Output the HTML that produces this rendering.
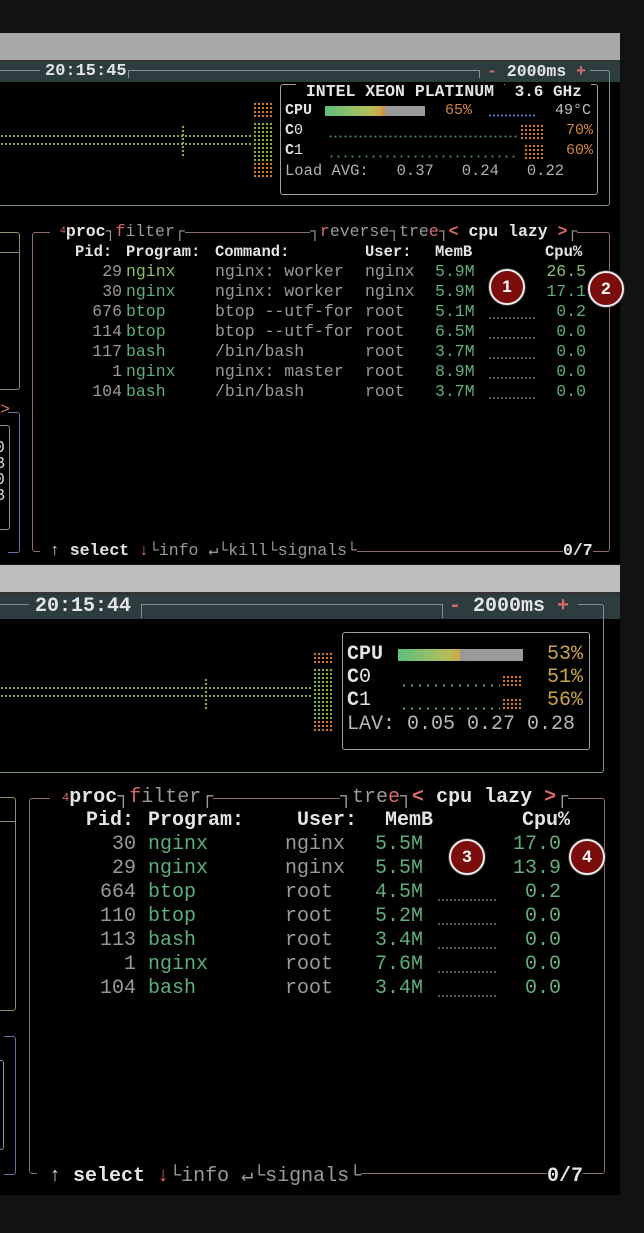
<!DOCTYPE html>
<html><head><meta charset="utf-8"><style>
*{margin:0;padding:0;box-sizing:border-box}
body{width:644px;height:1233px;background:#121212;position:relative;overflow:hidden;font-family:"Liberation Mono",monospace}
.a{position:absolute}
.t{position:absolute;white-space:pre;font-size:16.5px;line-height:20px;color:#9a9a9a}
.u{position:absolute;white-space:pre;font-size:20px;line-height:24px;color:#9a9a9a}
.ra{text-align:right}
.b{font-weight:bold;color:#e4e4e4}
.g{color:#5fae7c}.lg{color:#8fbf6a}.o{color:#d4843c}.y{color:#c9a64a}.r{color:#d86a6a}.w{color:#d8d8d8}
.dl{position:absolute;background:radial-gradient(circle,#9ab84a 0.9px,transparent 1.3px) 0 0/4px 4px}
.db{position:absolute;background:radial-gradient(circle,#8ab04a 1px,transparent 1.4px) 0 0/4px 4px}
.dob{position:absolute;background:radial-gradient(circle,#d07a30 1px,transparent 1.4px) 0 0/4px 4px}
.dd{position:absolute;height:4px;background:radial-gradient(circle,#8a8a8a 0.7px,transparent 1.1px) 0 0/4px 4px}
.ann{position:absolute;width:36px;height:36px;border-radius:50%;background:#7c0d0d;border:2px solid #eee;box-shadow:0 0 0 1px #333;color:#fff;font:bold 17px "Liberation Sans",sans-serif;text-align:center;line-height:32px}
</style></head><body>
<!-- TOP WINDOW -->
<div class="a" style="left:0;top:33px;width:620px;height:27px;background:#a8a8a8"></div>
<div class="a" style="left:0;top:60px;width:620px;height:2px;background:#333"></div>
<div class="a" style="left:0;top:62px;width:620px;height:20px;background:#2d3c3f"></div>
<div class="a" style="left:0;top:82px;width:620px;height:482px;background:#000"></div>
<div class="a" style="left:0;top:70px;width:40px;height:1px;background:#7a9290"></div>
<div class="a" style="left:128px;top:70px;width:352px;height:8px;border-top:1px solid #7a9290;border-left:1px solid #7a9290;border-right:1px solid #7a9290"></div>
<div class="a" style="left:590px;top:70px;width:20px;height:136px;border-top:1px solid #7a9290;border-right:1px solid #7a9290;border-bottom:1px solid #7a9290;border-radius:0 3px 3px 0"></div>
<div class="a" style="left:0;top:205px;width:600px;height:1px;background:#7a9290"></div>
<div class="t b" style="left:45px;top:62px;font-size:17px">20:15:45</div>
<div class="t b" style="left:487px;top:62px"><span class="r">-</span> 2000ms <span class="r">+</span></div>
<div class="a" style="left:280px;top:84px;width:318px;height:111px;border:1px solid #a0a0a0;border-radius:3px"></div>
<div class="t b" style="left:296px;top:82px;background:#000;font-size:16.5px"> INTEL XEON PLATINUM </div>
<div class="t b" style="left:505px;top:82px;background:#000;font-size:16px"> 3.6 GHz </div>
<div class="t b" style="left:285px;top:101px;font-size:15px">CPU</div>
<div class="a" style="left:325px;top:106px;width:100px;height:10px;background:linear-gradient(90deg,#5fbf7f 0,#8fbf6a 25px,#b5bd58 45px,#c9a74a 55px,#d4843c 60px,#9a9a9a 60px)"></div>
<div class="t o" style="left:445px;top:101px;font-size:15px">65%</div>
<div class="a" style="left:488px;top:114px;width:48px;height:3px;background:radial-gradient(circle,#4d7fd6 0.8px,transparent 1.2px) 0 0/4px 3px"></div>
<div class="t" style="left:555px;top:101px;font-size:15px;color:#c0c0c0">49°C</div>
<div class="t b" style="left:285px;top:121px;font-size:15px">C<span style="font-weight:normal">0</span></div>
<div class="t o" style="left:566px;top:121px;font-size:15px">70%</div>
<div class="t b" style="left:285px;top:141px;font-size:15px">C<span style="font-weight:normal">1</span></div>
<div class="t o" style="left:566px;top:141px;font-size:15px">60%</div>
<div class="a" style="left:328px;top:135px;width:190px;height:3px;background:radial-gradient(circle,#5faf7c 0.8px,transparent 1.2px) 0 0/5px 3px;opacity:.8"></div>
<div class="a" style="left:328px;top:155px;width:190px;height:3px;background:radial-gradient(circle,#5faf7c 0.8px,transparent 1.2px) 0 0/7px 3px;opacity:.8"></div>
<div class="dob" style="left:520px;top:124px;width:24px;height:16px"></div>
<div class="dob" style="left:524px;top:144px;width:20px;height:16px"></div>
<div class="t" style="left:285px;top:161px;font-size:15.5px;color:#b0b0b0">Load AVG:   0.37   0.24   0.22</div>
<div class="dl" style="left:0;top:134px;width:253px;height:4px"></div>
<div class="dl" style="left:0;top:142px;width:253px;height:4px"></div>
<div class="db" style="left:181px;top:125px;width:4px;height:32px"></div>
<div class="dob" style="left:253px;top:102px;width:20px;height:16px"></div>
<div class="db" style="left:253px;top:122px;width:20px;height:40px"></div>
<div class="dob" style="left:253px;top:162px;width:20px;height:16px"></div>
<div class="a" style="left:-5px;top:232px;width:25px;height:158px;border:1px solid #8a9070;border-radius:3px"></div>
<div class="a" style="left:0;top:252px;width:20px;height:1px;background:#8a9070"></div>
<div class="a" style="left:8px;top:412px;width:12px;height:141px;border:1px solid #7070a0;border-left:none;border-radius:0 3px 3px 0"></div>
<div class="a" style="left:-5px;top:425px;width:15px;height:105px;border:1px solid #909090;border-radius:3px"></div>
<div class="t r" style="left:0;top:400px">&gt;</div>
<div class="t w" style="left:-5px;top:440px;line-height:16px">0<br>B<br>0<br>B</div>
<div class="a" style="left:32px;top:232px;width:578px;height:320px;border:1px solid #8e6e6e;border-radius:3px"></div>
<div class="t" style="left:50px;top:222px;background:#000"> <span class="r" style="font-size:10px;vertical-align:top">4</span><span class="b">proc</span>┐<span class="r">f</span>ilter┌</div>
<div class="t" style="left:310px;top:222px;background:#000">┐<span class="r">r</span>everse┐tre<span class="r">e</span>┐<span class="r b">&lt;</span><span class="b"> cpu lazy </span><span class="r b">&gt;</span>┌</div>
<div class="t b" style="left:75px;top:242px;font-size:15.5px">Pid:</div>
<div class="t b" style="left:126px;top:242px;font-size:15.5px">Program:</div>
<div class="t b" style="left:215px;top:242px;font-size:15.5px">Command:</div>
<div class="t b" style="left:365px;top:242px;font-size:15.5px">User:</div>
<div class="t b" style="left:435px;top:242px;font-size:15.5px">MemB</div>
<div class="t b" style="left:545px;top:242px;font-size:15.5px">Cpu%</div>
<div class="t ra" style="left:60px;top:262px;width:62px">29
30
676
114
117
1
104</div>
<div class="t" style="left:126px;top:262px"><span class="lg">nginx</span>
<span class="g">nginx</span>
<span class="g">btop</span>
<span class="g">btop</span>
<span class="g">bash</span>
<span class="g">nginx</span>
<span class="g">bash</span></div>
<div class="t" style="left:215px;top:262px">nginx: worker
nginx: worker
btop --utf-for
btop --utf-for
/bin/bash
nginx: master
/bin/bash</div>
<div class="t" style="left:365px;top:262px">nginx
nginx
root
root
root
root
root</div>
<div class="t g" style="left:435px;top:262px">5.9M
5.9M
5.1M
6.5M
3.7M
8.9M
3.7M</div>
<div class="t ra g" style="left:520px;top:262px;width:66px"><span class="lg">26.5</span>
17.1
0.2
0.0
0.0
0.0
0.0</div>
<div class="dd" style="left:488px;top:316px;width:48px"></div>
<div class="dd" style="left:488px;top:336px;width:48px"></div>
<div class="dd" style="left:488px;top:356px;width:48px"></div>
<div class="dd" style="left:488px;top:376px;width:48px"></div>
<div class="dd" style="left:488px;top:396px;width:48px"></div>
<div class="t" style="left:40px;top:541px;background:#000"> <span class="w">↑</span> <span class="b">select</span> <span class="r">↓</span>└info ↵└kill└signals└</div>
<div class="t b" style="left:563px;top:541px;background:#000">0/7</div>
<div class="ann" style="left:489px;top:269px">1</div>
<div class="ann" style="left:588px;top:271px">2</div>

<!-- BOTTOM WINDOW -->
<div class="a" style="left:0;top:565px;width:620px;height:27px;background:#bdbdbd"></div>
<div class="a" style="left:0;top:592px;width:620px;height:3px;background:#333"></div>
<div class="a" style="left:0;top:595px;width:620px;height:24px;background:#2d3c3f"></div>
<div class="a" style="left:0;top:619px;width:620px;height:576px;background:#000"></div>
<div class="a" style="left:0;top:604px;width:29px;height:1px;background:#7a9290"></div>
<div class="a" style="left:141px;top:604px;width:302px;height:14px;border-top:1px solid #7a9290;border-left:1px solid #7a9290;border-right:1px solid #7a9290"></div>
<div class="a" style="left:578px;top:604px;width:26px;height:169px;border-top:1px solid #7a9290;border-right:1px solid #7a9290;border-bottom:1px solid #7a9290;border-radius:0 3px 3px 0"></div>
<div class="a" style="left:0;top:772px;width:590px;height:1px;background:#7a9290"></div>
<div class="u b" style="left:35px;top:595px">20:15:44</div>
<div class="u b" style="left:449px;top:595px"><span class="r">-</span> 2000ms <span class="r">+</span></div>
<div class="a" style="left:342px;top:632px;width:248px;height:118px;border:1px solid #a0a0a0;border-radius:3px"></div>
<div class="u b" style="left:347px;top:643px">CPU</div>
<div class="a" style="left:398px;top:649px;width:125px;height:12px;background:linear-gradient(90deg,#5fbf7f 0,#8fbf6a 30px,#b5bd58 50px,#c9a74a 62px,#9a9a9a 62px)"></div>
<div class="u y" style="left:547px;top:643px">53%</div>
<div class="u b" style="left:347px;top:666px">C<span style="font-weight:normal">0</span></div>
<div class="u y" style="left:547px;top:666px">51%</div>
<div class="u b" style="left:347px;top:689px">C<span style="font-weight:normal">1</span></div>
<div class="u y" style="left:547px;top:689px">56%</div>
<div class="a" style="left:400px;top:684px;width:100px;height:3px;background:radial-gradient(circle,#5faf7c 0.9px,transparent 1.3px) 0 0/8px 3px"></div>
<div class="a" style="left:400px;top:707px;width:100px;height:3px;background:radial-gradient(circle,#5faf7c 0.9px,transparent 1.3px) 0 0/8px 3px"></div>
<div class="dob" style="left:502px;top:675px;width:20px;height:12px"></div>
<div class="dob" style="left:502px;top:698px;width:20px;height:12px"></div>
<div class="u" style="left:347px;top:713px;color:#b8b8b8">LAV: 0.05 0.27 0.28</div>
<div class="dl" style="left:0;top:686px;width:312px;height:4px"></div>
<div class="dl" style="left:0;top:694px;width:312px;height:4px"></div>
<div class="db" style="left:204px;top:678px;width:4px;height:32px"></div>
<div class="dob" style="left:313px;top:652px;width:20px;height:12px"></div>
<div class="db" style="left:313px;top:668px;width:20px;height:52px"></div>
<div class="dob" style="left:313px;top:720px;width:20px;height:12px"></div>
<div class="a" style="left:-5px;top:797px;width:21px;height:214px;border:1px solid #8a9070;border-radius:3px"></div>
<div class="a" style="left:0;top:821px;width:16px;height:1px;background:#8a9070"></div>
<div class="a" style="left:4px;top:1036px;width:12px;height:139px;border:1px solid #7070a0;border-left:none;border-radius:0 3px 3px 0"></div>
<div class="a" style="left:-5px;top:1060px;width:9px;height:90px;border:1px solid #909090;border-radius:3px"></div>
<div class="a" style="left:29px;top:798px;width:576px;height:376px;border:1px solid #8e6e6e;border-radius:3px"></div>
<div class="u" style="left:50px;top:786px;background:#000"> <span class="r" style="font-size:12px;vertical-align:top">4</span><span class="b">proc</span>┐<span class="r">f</span>ilter┌</div>
<div class="u" style="left:340px;top:786px;background:#000">┐tre<span class="r">e</span>┐<span class="r b">&lt;</span><span class="b"> cpu lazy </span><span class="r b">&gt;</span>┌</div>
<div class="u b" style="left:86px;top:809px">Pid:</div>
<div class="u b" style="left:148px;top:809px">Program:</div>
<div class="u b" style="left:297px;top:809px">User:</div>
<div class="u b" style="left:385px;top:809px">MemB</div>
<div class="u b" style="left:522px;top:809px">Cpu%</div>
<div class="u ra" style="left:60px;top:833px;width:76px">30
29
664
110
113
1
104</div>
<div class="u g" style="left:148px;top:833px">nginx
nginx
btop
btop
bash
nginx
bash</div>
<div class="u" style="left:285px;top:833px">nginx
nginx
root
root
root
root
root</div>
<div class="u g" style="left:375px;top:833px">5.5M
5.5M
4.5M
5.2M
3.4M
7.6M
3.4M</div>
<div class="u ra g" style="left:490px;top:833px;width:71px">17.0
13.9
0.2
0.0
0.0
0.0
0.0</div>
<div class="dd" style="left:437px;top:898px;width:60px"></div>
<div class="dd" style="left:437px;top:922px;width:60px"></div>
<div class="dd" style="left:437px;top:946px;width:60px"></div>
<div class="dd" style="left:437px;top:970px;width:60px"></div>
<div class="dd" style="left:437px;top:994px;width:60px"></div>
<div class="u" style="left:37px;top:1165px;background:#000"> <span class="w">↑</span> <span class="b">select</span> <span class="r">↓</span>└info ↵└signals└</div>
<div class="u b" style="left:547px;top:1165px;background:#000">0/7</div>
<div class="ann" style="left:449px;top:839px">3</div>
<div class="ann" style="left:569px;top:839px">4</div>
</body></html>
